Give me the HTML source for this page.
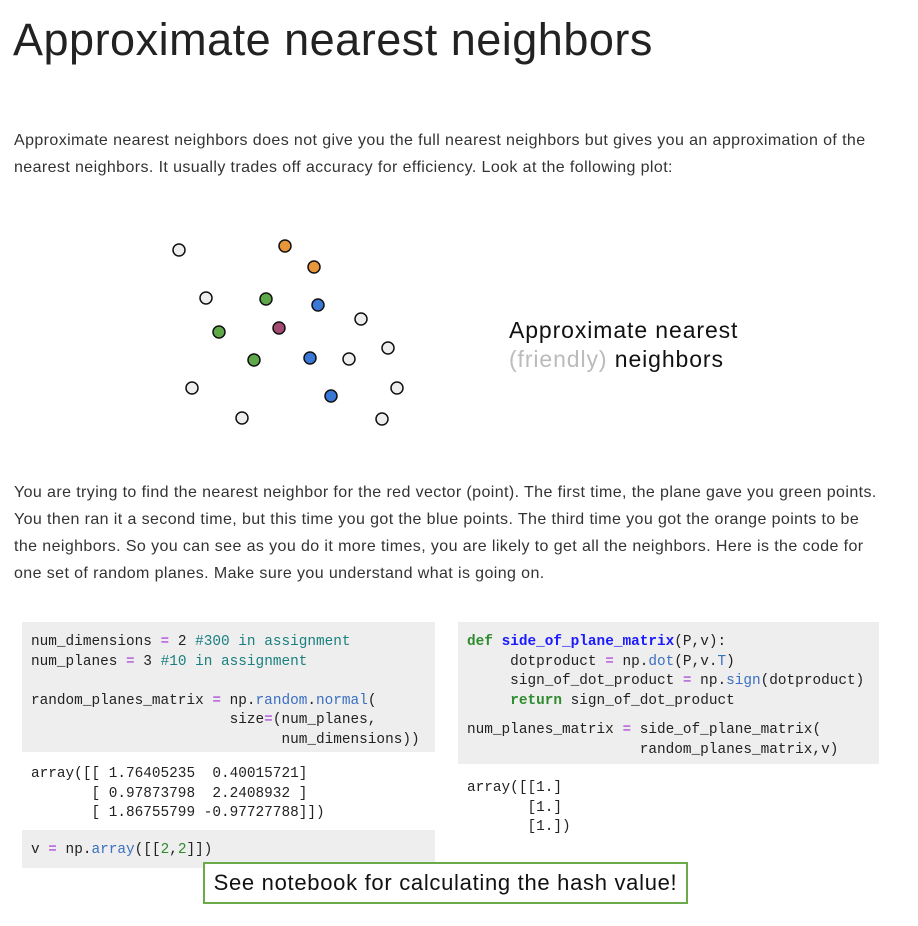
<!DOCTYPE html>
<html><head><meta charset="utf-8"><style>
body{margin:0;width:918px;height:926px;background:#fff;position:relative;font-family:"Liberation Sans",sans-serif;color:#222;overflow:hidden}
.a{position:absolute;white-space:nowrap}
h1{position:absolute;left:13px;top:14px;margin:0;font-weight:normal;font-size:45px;letter-spacing:0.5px;color:#222}
.p{font-size:16px;letter-spacing:0.4px;color:#333;line-height:27px}
.box{position:absolute;background:#eeeeee}
pre{margin:0;font-family:"Liberation Mono",monospace;font-size:14.4px;line-height:19.5px;color:#222;position:absolute}
.o{color:#a22fd6}.c{color:#1a7f7f}.b{color:#3a6fc0}.k{color:#2e8b2e;font-weight:bold}.f{color:#1a1aff;font-weight:bold}.n{color:#2e8b2e}
</style></head><body>
<h1>Approximate nearest neighbors</h1>
<div class="a p" style="left:14px;top:127px">Approximate nearest neighbors does not give you the full nearest neighbors but gives you an approximation of the<br>nearest neighbors. It usually trades off accuracy for efficiency. Look at the following plot:</div>
<svg class="a" style="left:0;top:0" width="918" height="460">
<g stroke="#111" stroke-width="1.5">
<circle cx="179" cy="250" r="6" fill="#eee"/><circle cx="285" cy="246" r="6" fill="#e8963a"/><circle cx="314" cy="267" r="6" fill="#e8963a"/>
<circle cx="206" cy="298" r="6" fill="#eee"/><circle cx="266" cy="299" r="6" fill="#5fa84a"/><circle cx="318" cy="305" r="6" fill="#3a78d8"/>
<circle cx="361" cy="319" r="6" fill="#eee"/><circle cx="219" cy="332" r="6" fill="#5fa84a"/><circle cx="279" cy="328" r="6" fill="#a44a72"/>
<circle cx="388" cy="348" r="6" fill="#eee"/><circle cx="254" cy="360" r="6" fill="#5fa84a"/><circle cx="310" cy="358" r="6" fill="#3a78d8"/>
<circle cx="349" cy="359" r="6" fill="#eee"/><circle cx="192" cy="388" r="6" fill="#eee"/><circle cx="397" cy="388" r="6" fill="#eee"/>
<circle cx="331" cy="396" r="6" fill="#3a78d8"/><circle cx="242" cy="418" r="6" fill="#eee"/><circle cx="382" cy="419" r="6" fill="#eee"/>
</g></svg>
<div class="a" style="left:509px;top:316px;font-size:23px;line-height:29px;letter-spacing:0.9px;color:#111">Approximate nearest<br><span style="color:#bbb">(friendly)</span> neighbors</div>
<div class="a p" style="left:14px;top:479px">You are trying to find the nearest neighbor for the red vector (point). The first time, the plane gave you green points.<br>You then ran it a second time, but this time you got the blue points. The third time you got the orange points to be<br>the neighbors. So you can see as you do it more times, you are likely to get all the neighbors. Here is the code for<br>one set of random planes. Make sure you understand what is going on.</div>
<div class="box" style="left:22px;top:622px;width:413px;height:130px"></div>
<pre style="left:31px;top:633px">num_dimensions <span class="o">=</span> 2 <span class="c">#300 in assignment</span>
num_planes <span class="o">=</span> 3 <span class="c">#10 in assignment</span>

random_planes_matrix <span class="o">=</span> np.<span class="b">random</span>.<span class="b">normal</span>(
                       size<span class="o">=</span>(num_planes,
                             num_dimensions))</pre>
<pre style="left:31px;top:765px">array([[ 1.76405235  0.40015721]
       [ 0.97873798  2.2408932 ]
       [ 1.86755799 -0.97727788]])</pre>
<div class="box" style="left:22px;top:830px;width:413px;height:38px"></div>
<pre style="left:31px;top:841px">v <span class="o">=</span> np.<span class="b">array</span>([[<span class="n">2</span>,<span class="n">2</span>]])</pre>
<div class="box" style="left:458px;top:622px;width:421px;height:142px"></div>
<pre style="left:467px;top:633px"><span class="k">def</span> <span class="f">side_of_plane_matrix</span>(P,v):
     dotproduct <span class="o">=</span> np.<span class="b">dot</span>(P,v.<span class="b">T</span>)
     sign_of_dot_product <span class="o">=</span> np.<span class="b">sign</span>(dotproduct)
     <span class="k">return</span> sign_of_dot_product</pre>
<pre style="left:467px;top:721px">num_planes_matrix <span class="o">=</span> side_of_plane_matrix(
                    random_planes_matrix,v)</pre>
<pre style="left:467px;top:779px">array([[1.]
       [1.]
       [1.])</pre>
<div class="a" style="left:203px;top:862px;width:481px;height:38px;border:2px solid #6aaa4a;background:#fff;font-size:22px;line-height:38px;text-align:center;letter-spacing:0.7px;color:#111">See notebook for calculating the hash value!</div>
</body></html>
